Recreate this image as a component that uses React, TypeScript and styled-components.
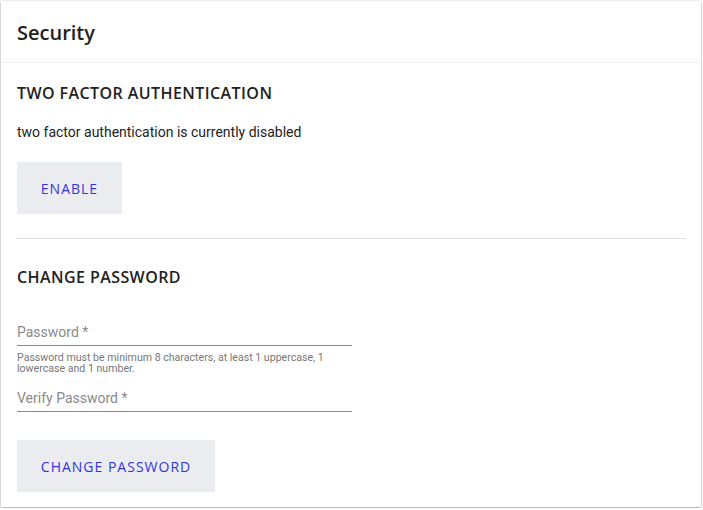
import React from "react";
import styled, { createGlobalStyle } from "styled-components";

const Global = createGlobalStyle`
  html, body { margin: 0; padding: 0; background: #ffffff; }
  * { box-sizing: border-box; }
`;

const Card = styled.div`
  width: 700px;
  height: 506px;
  margin: 1px;
  background: #fff;
  box-shadow: 0 1px 2px rgba(0,0,0,0.35), 0 0 1px rgba(0,0,0,0.25);
  display: flex;
  flex-direction: column;
`;

const Header = styled.div`
  height: 62px;
  border-bottom: 1px solid #f0f0f0;
  display: flex;
  align-items: center;
  padding: 3px 16px 0;
`;

const Title = styled.h1`
  margin: 0;
  font-family: "Open Sans", sans-serif;
  font-weight: 600;
  font-size: 20px;
  color: #222;
  line-height: 1;
`;

const Body = styled.div`
  padding: 0 16px;
  display: flex;
  flex-direction: column;
`;

const SectionTitle = styled.h2<{ $top: number }>`
  margin: ${(p) => p.$top}px 0 0;
  font-family: "Open Sans", sans-serif;
  font-weight: 600;
  font-size: 16px;
  line-height: 22px;
  color: #222;
  text-transform: uppercase;
  letter-spacing: 0.42px;
`;

const Text = styled.p`
  margin: 19px 0 0;
  font-family: Roboto, sans-serif;
  font-size: 14px;
  line-height: 18px;
  color: #222;
`;

const Button = styled.button<{ $w: number; $top: number }>`
  width: ${(p) => p.$w}px;
  height: 52px;
  margin-top: ${(p) => p.$top}px;
  border: none;
  background: #ebecf0;
  color: #3535db;
  font-family: "Open Sans", sans-serif;
  font-size: 14px;
  letter-spacing: 1px;
  text-transform: uppercase;
  padding: 0;
  cursor: pointer;
`;

const Divider = styled.hr`
  margin: 24px 0 0;
  border: none;
  border-top: 1px solid #dedede;
  width: 669px;
`;

const Field = styled.div<{ $top: number }>`
  width: 335px;
  margin-top: ${(p) => p.$top}px;
  display: flex;
  flex-direction: column;
`;

const Label = styled.div`
  font-family: Roboto, sans-serif;
  font-size: 14px;
  line-height: 18px;
  color: #8a8a8a;
  padding-bottom: 4px;
  border-bottom: 1px solid #8a8a8a;
`;

const Helper = styled.div`
  margin-top: 6px;
  font-family: Roboto, sans-serif;
  font-size: 10.6px;
  line-height: 11px;
  color: #777;
`;

export default function App() {
  return (
    <>
      <Global />
      <Card>
        <Header>
          <Title>Security</Title>
        </Header>
        <Body>
          <SectionTitle $top={19}>Two Factor Authentication</SectionTitle>
          <Text>two factor authentication is currently disabled</Text>
          <Button $w={105} $top={21}>Enable</Button>
          <Divider />
          <SectionTitle $top={27}>Change Password</SectionTitle>
          <Field $top={35}>
            <Label>Password *</Label>
            <Helper>
              Password must be minimum 8 characters, at least 1 uppercase, 1 lowercase and 1 number.
            </Helper>
          </Field>
          <Field $top={15}>
            <Label>Verify Password *</Label>
          </Field>
          <Button $w={198} $top={28}>Change Password</Button>
        </Body>
      </Card>
    </>
  );
}
